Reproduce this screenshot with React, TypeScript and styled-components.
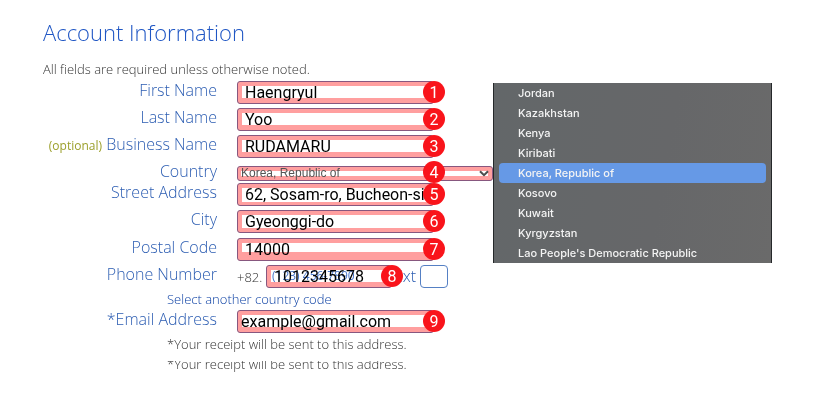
import React from "react";
import styled, { createGlobalStyle } from "styled-components";

const GlobalStyle = createGlobalStyle`
  *, *::before, *::after { box-sizing: border-box; }
  body {
    margin: 0;
    background: #fff;
    color: #5e5e5e;
    font-family: "Open Sans", sans-serif;
  }
`;

const Page = styled.main`
  display: grid;
  grid-template-columns: 450fr 279fr;
  align-items: start;
  padding: 16px 48px 16px 43px;
`;

const Title = styled.h1`
  grid-column: 1 / -1;
  margin: 0;
  font-size: 22px;
  line-height: 32px;
  font-weight: 300;
  color: #1f56c4;
`;

const Note = styled.p`
  grid-column: 1 / -1;
  margin: 11px 0 0;
  font-size: 13px;
  line-height: 20px;
  font-weight: 300;
  color: #333;
`;

const Form = styled.form`
  display: flex;
  flex-direction: column;
  gap: 4px;
  padding-top: 2px;
`;

const Row = styled.div<{ $height?: number }>`
  display: grid;
  grid-template-columns: 174px 1fr;
  column-gap: 20px;
  align-items: start;
  height: ${(p) => p.$height ?? 23}px;
`;

const CountryRow = styled(Row)`
  align-items: end;
`;

const Label = styled.label`
  text-align: right;
  white-space: nowrap;
  font-size: 16px;
  line-height: 19px;
  font-weight: 300;
  color: #2c5db2;
`;

const Optional = styled.span`
  font-size: 12px;
  font-weight: 400;
  color: #9ca02c;
`;

const Field = styled.div<{ $width?: number }>`
  position: relative;
  width: 100%;
  max-width: ${(p) => p.$width ?? 197}px;
`;

const Input = styled.input<{ $strip?: number; $tight?: boolean }>`
  display: block;
  width: 100%;
  height: 23px;
  padding: 0 4px 0 ${(p) => (p.$tight ? 3 : 7)}px;
  border: 1px solid #87577f;
  border-radius: 3px;
  background: #ff9f9f linear-gradient(#fff, #fff) 4px 4px / calc(100% - 8px)
    ${(p) => p.$strip ?? 12}px no-repeat;
  color: #000;
  font-family: Roboto, sans-serif;
  font-size: 16px;
  outline: none;
`;

const Select = styled.select`
  display: block;
  width: 100%;
  height: 15px;
  padding: 0 20px 0 3px;
  appearance: none;
  border: 1px solid #87577f;
  border-radius: 3px;
  background: #ff9f9f linear-gradient(#fff, #fff) 3px 4px / calc(100% - 7px)
    5px no-repeat;
  color: #555;
  font-family: "Liberation Sans", sans-serif;
  font-size: 12px;
  line-height: 13px;
  outline: none;
`;

const Arrow = styled.svg`
  position: absolute;
  top: 4px;
  right: 4px;
  width: 10px;
  height: 7px;
  pointer-events: none;
`;

const Badge = styled.span<{ $onSelect?: boolean }>`
  position: absolute;
  top: ${(p) => (p.$onSelect ? -5 : 0)}px;
  right: ${(p) => (p.$onSelect ? 48 : -11)}px;
  z-index: 1;
  width: 22px;
  height: 22px;
  border-radius: 50%;
  background: #f9141b;
  color: #fff;
  text-align: center;
  font-family: Roboto, sans-serif;
  font-size: 16px;
  line-height: 23px;
`;

const PhoneLine = styled.div`
  display: flex;
  align-items: center;
`;

const Prefix = styled.span`
  flex: none;
  width: 29px;
  font-size: 13px;
  line-height: 20px;
  font-weight: 300;
  color: #333;
`;

const Mask = styled.span`
  position: absolute;
  top: 2px;
  left: 6px;
  white-space: nowrap;
  font-size: 12px;
  line-height: 18px;
  color: #4a78cc;
  mix-blend-mode: multiply;
  pointer-events: none;
`;

const ExtLabel = styled(Label)`
  flex: none;
  width: 28px;
  padding-right: 4px;
`;

const ExtInput = styled.input`
  width: 28px;
  height: 23px;
  border: 1px solid #5580c4;
  border-radius: 4px;
  background: #fff;
  outline: none;
`;

const CodeLink = styled.a`
  align-self: flex-start;
  margin-left: 124px;
  font-size: 13px;
  line-height: 14px;
  font-weight: 300;
  color: #0c40a4;
  text-decoration: none;
`;

const Receipt = styled.p`
  margin: -3px 0 0 124px;
  font-size: 13px;
  line-height: 20px;
  font-weight: 300;
  color: #333;
`;

const CutReceipt = styled(Receipt)`
  display: flex;
  align-items: flex-end;
  height: 13px;
  margin-top: 3px;
  overflow: hidden;
`;

const Menu = styled.ul`
  margin: 4px 0 0;
  padding: 0 5px;
  list-style: none;
  border: solid #25282a;
  border-width: 0 1px;
  background: linear-gradient(100deg, #636769, #666769 60%, #6a6a6a);
`;

const Choice = styled.button<{ $active?: boolean }>`
  display: block;
  width: 100%;
  height: 20px;
  padding: 0 19px;
  border: 0;
  border-radius: 4px;
  background: ${(p) => (p.$active ? "#6699e6" : "transparent")};
  color: #f4f4f4;
  text-align: left;
  white-space: nowrap;
  font-family: Inter, sans-serif;
  font-size: 11px;
  font-weight: 500;
  line-height: 20px;
`;

type TextFieldProps = {
  id: string;
  label: React.ReactNode;
  value: string;
  badge: number;
  strip?: number;
  tight?: boolean;
  height?: number;
};

const TextField = ({ id, label, value, badge, strip, tight, height }: TextFieldProps) => (
  <Row $height={height}>
    <Label htmlFor={id}>{label}</Label>
    <Field>
      <Input id={id} defaultValue={value} $strip={strip} $tight={tight} />
      <Badge>{badge}</Badge>
    </Field>
  </Row>
);

const countries = [
  "Jordan",
  "Kazakhstan",
  "Kenya",
  "Kiribati",
  "Korea, Republic of",
  "Kosovo",
  "Kuwait",
  "Kyrgyzstan",
  "Lao People's Democratic Republic",
];

export default function App() {
  const [country, setCountry] = React.useState("Korea, Republic of");

  return (
    <>
      <GlobalStyle />
      <Page>
        <Title>Account Information</Title>
        <Note>All fields are required unless otherwise noted.</Note>
        <Form>
          <TextField id="first" label="First Name" value="Haengryul" badge={1} />
          <TextField id="last" label="Last Name" value="Yoo" badge={2} />
          <TextField
            id="business"
            label={<><Optional>(optional)</Optional> Business Name</>}
            value="RUDAMARU"
            badge={3}
          />
          <CountryRow $height={17}>
            <Label htmlFor="country">Country</Label>
            <Field $width={256}>
              <Select
                id="country"
                value={country}
                onChange={(e) => setCountry(e.target.value)}
              >
                {countries.map((name) => (
                  <option key={name}>{name}</option>
                ))}
              </Select>
              <Arrow viewBox="0 0 10 7">
                <path d="M1 1.2 5 5.2 9 1.2" fill="none" stroke="#4d4d4d" strokeWidth="2" />
              </Arrow>
              <Badge $onSelect>4</Badge>
            </Field>
          </CountryRow>
          <TextField id="street" label="Street Address" value="62, Sosam-ro, Bucheon-si" badge={5} strip={14} />
          <TextField id="city" label="City" value="Gyeonggi-do" badge={6} strip={13} height={24} />
          <TextField id="postal" label="Postal Code" value="14000" badge={7} strip={9} />
          <Row>
            <Label htmlFor="phone">Phone Number</Label>
            <PhoneLine>
              <Prefix>+82.</Prefix>
              <Field $width={126}>
                <Input id="phone" type="tel" defaultValue="1012345678" />
                <Mask aria-hidden="true">(123) 456-7890</Mask>
                <Badge>8</Badge>
              </Field>
              <ExtLabel htmlFor="ext">Ext</ExtLabel>
              <ExtInput id="ext" />
            </PhoneLine>
          </Row>
          <CodeLink href="#country-code">Select another country code</CodeLink>
          <TextField id="email" label="*Email Address" value="example@gmail.com" badge={9} tight />
          <Receipt>*Your receipt will be sent to this address.</Receipt>
          <CutReceipt>*Your receipt will be sent to this address.</CutReceipt>
        </Form>
        <Menu aria-label="Countries">
          {countries.map((name) => (
            <li key={name}>
              <Choice type="button" $active={name === country} onClick={() => setCountry(name)}>
                {name}
              </Choice>
            </li>
          ))}
        </Menu>
      </Page>
    </>
  );
}
